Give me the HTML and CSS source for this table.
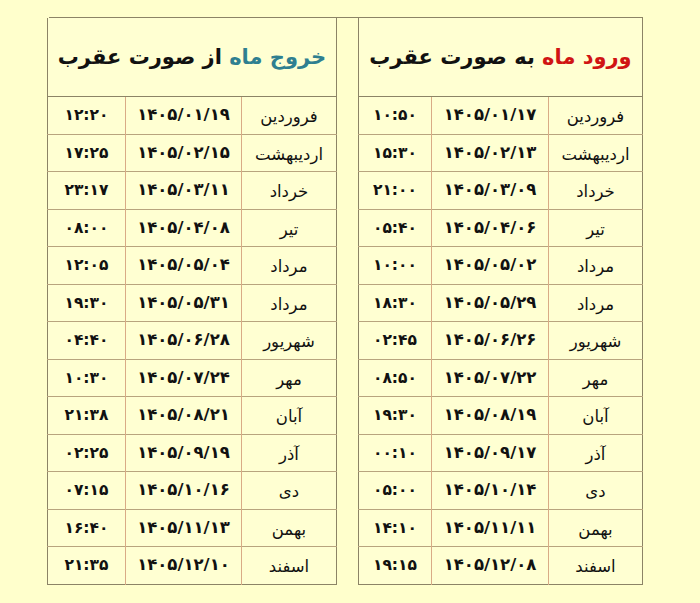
FILE: index.html
```html
<!DOCTYPE html>
<html lang="fa">
<head>
<meta charset="utf-8">
<link rel="stylesheet" href="styles.css">
</head>
<body>
<div class="wrap" dir="rtl">
  <table class="tbl tbl-in">
    <colgroup><col class="c-month"><col class="c-date"><col class="c-time"></colgroup>
    <tr><th colspan="3" class="head"><span class="red">ورود ماه</span> به صورت عقرب</th></tr>
    <tr><td class="m">فروردین</td><td class="d">۱۴۰۵/۰۱/۱۷</td><td class="t">۱۰:۵۰</td></tr>
    <tr><td class="m">اردیبهشت</td><td class="d">۱۴۰۵/۰۲/۱۳</td><td class="t">۱۵:۳۰</td></tr>
    <tr><td class="m">خرداد</td><td class="d">۱۴۰۵/۰۳/۰۹</td><td class="t">۲۱:۰۰</td></tr>
    <tr><td class="m">تیر</td><td class="d">۱۴۰۵/۰۴/۰۶</td><td class="t">۰۵:۴۰</td></tr>
    <tr><td class="m">مرداد</td><td class="d">۱۴۰۵/۰۵/۰۲</td><td class="t">۱۰:۰۰</td></tr>
    <tr><td class="m">مرداد</td><td class="d">۱۴۰۵/۰۵/۲۹</td><td class="t">۱۸:۳۰</td></tr>
    <tr><td class="m">شهریور</td><td class="d">۱۴۰۵/۰۶/۲۶</td><td class="t">۰۲:۴۵</td></tr>
    <tr><td class="m">مهر</td><td class="d">۱۴۰۵/۰۷/۲۲</td><td class="t">۰۸:۵۰</td></tr>
    <tr><td class="m">آبان</td><td class="d">۱۴۰۵/۰۸/۱۹</td><td class="t">۱۹:۳۰</td></tr>
    <tr><td class="m">آذر</td><td class="d">۱۴۰۵/۰۹/۱۷</td><td class="t">۰۰:۱۰</td></tr>
    <tr><td class="m">دی</td><td class="d">۱۴۰۵/۱۰/۱۴</td><td class="t">۰۵:۰۰</td></tr>
    <tr><td class="m">بهمن</td><td class="d">۱۴۰۵/۱۱/۱۱</td><td class="t">۱۴:۱۰</td></tr>
    <tr><td class="m">اسفند</td><td class="d">۱۴۰۵/۱۲/۰۸</td><td class="t">۱۹:۱۵</td></tr>
  </table>
  <div class="gap"></div>
  <table class="tbl tbl-out">
    <colgroup><col class="c-month"><col class="c-date"><col class="c-time"></colgroup>
    <tr><th colspan="3" class="head"><span class="teal">خروج ماه</span> از صورت عقرب</th></tr>
    <tr><td class="m">فروردین</td><td class="d">۱۴۰۵/۰۱/۱۹</td><td class="t">۱۲:۲۰</td></tr>
    <tr><td class="m">اردیبهشت</td><td class="d">۱۴۰۵/۰۲/۱۵</td><td class="t">۱۷:۲۵</td></tr>
    <tr><td class="m">خرداد</td><td class="d">۱۴۰۵/۰۳/۱۱</td><td class="t">۲۳:۱۷</td></tr>
    <tr><td class="m">تیر</td><td class="d">۱۴۰۵/۰۴/۰۸</td><td class="t">۰۸:۰۰</td></tr>
    <tr><td class="m">مرداد</td><td class="d">۱۴۰۵/۰۵/۰۴</td><td class="t">۱۲:۰۵</td></tr>
    <tr><td class="m">مرداد</td><td class="d">۱۴۰۵/۰۵/۳۱</td><td class="t">۱۹:۳۰</td></tr>
    <tr><td class="m">شهریور</td><td class="d">۱۴۰۵/۰۶/۲۸</td><td class="t">۰۴:۴۰</td></tr>
    <tr><td class="m">مهر</td><td class="d">۱۴۰۵/۰۷/۲۴</td><td class="t">۱۰:۳۰</td></tr>
    <tr><td class="m">آبان</td><td class="d">۱۴۰۵/۰۸/۲۱</td><td class="t">۲۱:۳۸</td></tr>
    <tr><td class="m">آذر</td><td class="d">۱۴۰۵/۰۹/۱۹</td><td class="t">۰۲:۲۵</td></tr>
    <tr><td class="m">دی</td><td class="d">۱۴۰۵/۱۰/۱۶</td><td class="t">۰۷:۱۵</td></tr>
    <tr><td class="m">بهمن</td><td class="d">۱۴۰۵/۱۱/۱۳</td><td class="t">۱۶:۴۰</td></tr>
    <tr><td class="m">اسفند</td><td class="d">۱۴۰۵/۱۲/۱۰</td><td class="t">۲۱:۳۵</td></tr>
  </table>
</div>
</body>
</html>
```
FILE: styles.css
```css
html, body {
  margin: 0;
  padding: 0;
  background: #ffffcc;
}
body {
  font-family: "DejaVu Sans", sans-serif;
  color: #111;
}
.wrap {
  display: flex;
  flex-direction: row;
  align-items: flex-start;
  width: 594px;
  margin: 17px 0 0 49px;
  border-top: 1px solid #8c8466;
}
.gap {
  width: 21px;
  flex: none;
}
.tbl {
  border-collapse: collapse;
  table-layout: fixed;
  background: #ffffd2;
  border-left: 1px solid #8c8466;
  border-right: 1px solid #8c8466;
  border-bottom: 1px solid #8c8466;
  flex: none;
}
.tbl-in { width: 285px; }
.tbl-out { width: 289px; }
.tbl-in .c-month { width: 94px; }
.tbl-in .c-date { width: 117px; }
.tbl-in .c-time { width: 73px; }
.tbl-out .c-month { width: 95px; }
.tbl-out .c-date { width: 116px; }
.tbl-out .c-time { width: 78px; }
.head {
  height: 78px;
  padding: 0;
  text-align: center;
  font-size: 21px;
  font-weight: bold;
  border-bottom: 1px solid #8c8466;
}
.red { color: #d01414; }
.teal { color: #2f7f90; }
tr { height: 37.5px; }
tr:first-child { height: auto; }
td {
  padding: 0;
  line-height: 20px;
  text-align: center;
  vertical-align: middle;
  border-top: 1px solid #b8a47e;
  border-left: 1px solid #d9ab86;
}
td.t { border-left: none; }
td.m {
  font-size: 16.5px;
  padding-top: 4px;
}
td.d {
  font-size: 16.5px;
  font-weight: bold;
}
td.t {
  font-size: 15.5px;
  font-weight: bold;
}
tr:nth-child(2) td { border-top: none; }
```
